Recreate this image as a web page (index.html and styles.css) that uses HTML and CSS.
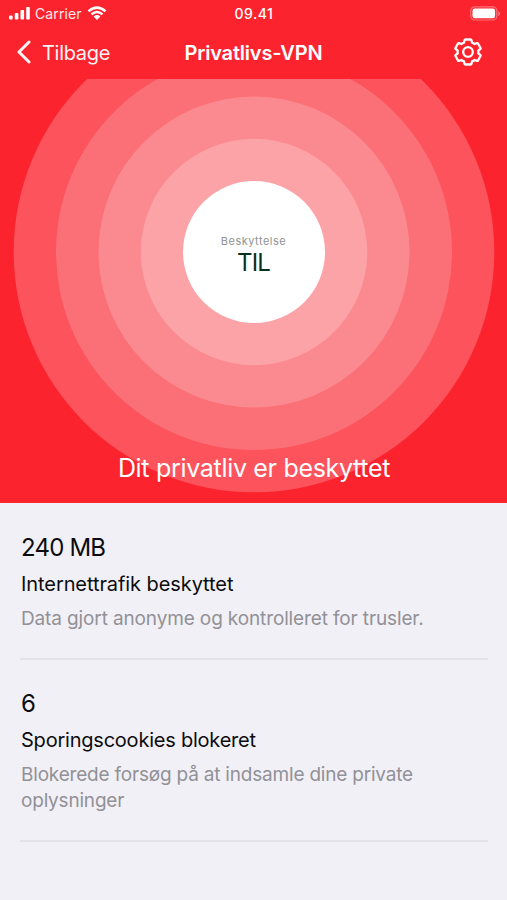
FILE: index.html
```html
<!DOCTYPE html>
<html lang="da">
<head>
<meta charset="utf-8">
<title>Privatlivs-VPN</title>
<link rel="stylesheet" href="styles.css">
</head>
<body>
<header class="top">
  <div class="status">
    <div class="status-left">
      <svg class="signal" width="22" height="14" viewBox="0 0 22 14" fill="#fff"><rect x="0" y="9.500" width="3.600" height="4" rx="1"/><rect x="5.800" y="7" width="3.600" height="6.500" rx="1"/><rect x="11.500" y="4" width="3.600" height="9.500" rx="1"/><rect x="17.200" y="1" width="3.600" height="12.500" rx="1"/></svg>
      <span class="carrier">Carrier</span>
      <svg class="wifi" width="20" height="15" viewBox="0 0 20 15" fill="none" stroke="#fff" stroke-width="2.500"><path d="M1.500 5.200Q10-2 18.500 5.200M4.500 8.400Q10 3.700 15.500 8.400"/><path d="M6.600 10.400Q10 7.500 13.400 10.400L10 14Z" fill="#fff" stroke="none"/></svg>
    </div>
    <span class="time">09.41</span>
    <svg class="battery" width="31" height="15" viewBox="0 0 31 15"><rect x=".8" y=".8" width="26" height="13.200" rx="4" fill="none" stroke="#fff" stroke-opacity=".35" stroke-width="1.200"/><rect x="2.500" y="2.500" width="22.600" height="9.800" rx="2.200" fill="#fff"/><path d="M28.300 5v5Q30 9 30 7.500T28.300 5Z" fill="#fff" fill-opacity=".45"/></svg>
  </div>
  <nav class="nav">
    <a class="back"><svg width="14" height="24" viewBox="0 0 14 24" fill="none" stroke="#fff" stroke-width="3" stroke-linecap="round" stroke-linejoin="round"><path d="M12 2 2 12 12 22"/></svg><span class="back-label">Tilbage</span></a>
    <h1 class="title">Privatlivs-VPN</h1>
    <svg class="gear" width="28" height="28" viewBox="0 0 28 28" fill="none" stroke="#fff" stroke-width="2.300" stroke-linejoin="round"><path d="M11.300 1.500H16.700Q17.300 1.500 17.500 2.200L18 4.600Q19.500 5.100 20.600 6L23 5.100Q23.600 4.900 24 5.500L26.500 10Q26.800 10.600 26.300 11L24.300 12.600Q24.500 14 24.300 15.400L26.300 17Q26.800 17.400 26.500 18L24 22.500Q23.600 23.100 23 22.900L20.600 22Q19.500 22.900 18 23.400L17.500 25.800Q17.300 26.500 16.700 26.500H11.300Q10.700 26.500 10.500 25.800L10 23.400Q8.500 22.900 7.400 22L5 22.900Q4.400 23.100 4 22.500L1.500 18Q1.200 17.400 1.700 17L3.700 15.400Q3.500 14 3.700 12.600L1.700 11Q1.200 10.600 1.500 10L4 5.500Q4.400 4.900 5 5.100L7.400 6Q8.500 5.100 10 4.600L10.500 2.200Q10.700 1.500 11.300 1.500Z"/><circle cx="14" cy="14" r="4.800"/></svg>
  </nav>
</header>
<section class="hero">
  <svg class="rings" width="507" height="424" viewBox="0 79 507 424"><circle cx="254" cy="252" r="240.300" fill="#fc535c"/><circle cx="254" cy="252" r="198" fill="#fb7077"/><circle cx="254" cy="252" r="155.500" fill="#fb8a90"/><circle cx="254" cy="252" r="113.200" fill="#fca3a8"/><circle cx="254" cy="252" r="71" fill="#fff"/></svg>
  <div class="toggle"><span class="toggle-label">Beskyttelse</span><span class="toggle-state">TIL</span></div>
  <p class="message">Dit privatliv er beskyttet</p>
</section>
<main class="stats">
  <article class="stat traffic">
    <p class="value">240 MB</p>
    <h2 class="name">Internettrafik beskyttet</h2>
    <p class="desc">Data gjort anonyme og kontrolleret for trusler.</p>
  </article>
  <article class="stat cookies">
    <p class="value">6</p>
    <h2 class="name">Sporingscookies blokeret</h2>
    <p class="desc">Blokerede forsøg på at indsamle dine private<br>oplysninger</p>
  </article>
</main>
</body>
</html>
```
FILE: styles.css
```css
* { box-sizing: border-box; }
body { margin: 0; width: 507px; height: 900px; overflow: hidden; background: #f1f0f6; font-family: Inter, "Liberation Sans", sans-serif; color: #0c0c0e; }
p, h1, h2 { margin: 0; font-weight: 400; }
svg { display: block; flex: none; }
.top { height: 79px; background: #fb242e; color: #fff; }
.status { height: 27px; display: grid; grid-template-columns: 1fr auto 1fr; align-items: center; padding: 0 6px 0 9px; }
.status-left { display: flex; align-items: center; }
.signal { margin-top: -1px; }
.carrier { margin-left: 4px; width: 47px; font-size: 14px; white-space: nowrap; opacity: .9; letter-spacing: .1px; }
.wifi { margin-left: 5px; margin-top: -1px; }
.time { font-size: 14px; font-weight: 500; letter-spacing: .5px; margin-left: -2px; }
.battery { justify-self: end; margin-top: -1px; }
.nav { height: 50px; display: grid; grid-template-columns: 1fr auto 1fr; align-items: center; padding: 0 25px 0 17px; }
.back { display: flex; align-items: center; gap: 11px; font-size: 20px; letter-spacing: -.3px; opacity: .95; }
.back-label { padding-top: 1px; }
.title { padding: 1px 0 0 8px; font-size: 20px; font-weight: 600; letter-spacing: -.2px; white-space: nowrap; }
.gear { justify-self: end; }
.hero { height: 424px; background: #fb242e; display: grid; }
.rings { grid-area: 1 / 1; }
.toggle { grid-area: 1 / 1; align-self: start; justify-self: center; width: 142px; height: 142px; margin-top: 102px; display: flex; flex-direction: column; align-items: center; padding-top: 53px; }
.toggle-label { font-size: 11px; line-height: 15px; letter-spacing: .5px; color: #929292; }
.toggle-state { font-size: 24px; line-height: 28px; color: #08301f; letter-spacing: -.8px; }
.message { grid-area: 1 / 1; align-self: end; justify-self: center; margin-bottom: 19px; padding-left: 1px; font-size: 25px; line-height: 32px; letter-spacing: -.31px; color: #fff; white-space: nowrap; }
.stats { padding: 0 19px 0 20px; }
.stat { border-bottom: 2px solid #e3e2e7; padding: 29px 0 26px 1px; white-space: nowrap; }
.cookies { padding-top: 28px; }
.value { font-size: 24px; line-height: 32px; letter-spacing: -.8px; }
.name { margin-top: 7px; font-size: 20px; line-height: 26px; letter-spacing: -.08px; }
.cookies .name { letter-spacing: -.22px; }
.desc { margin-top: 9px; font-size: 19px; line-height: 26px; letter-spacing: -.13px; color: #929197; }
.cookies .desc { letter-spacing: -.2px; }
```
